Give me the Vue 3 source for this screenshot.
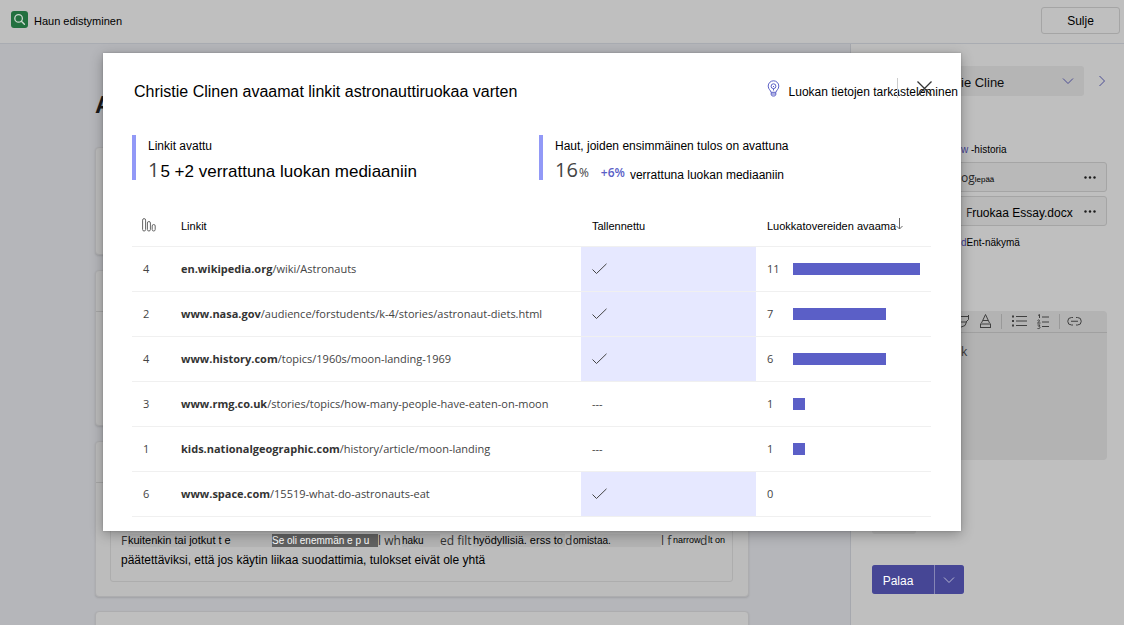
<script setup>
import { ref } from 'vue'

const maxOpened = 11
const rows = [
  { count: 4, host: 'en.wikipedia.org', path: '/wiki/Astronauts', saved: true, opened: 11, share: 100 },
  { count: 2, host: 'www.nasa.gov', path: '/audience/forstudents/k-4/stories/astronaut-diets.html', saved: true, opened: 7, share: 73 },
  { count: 4, host: 'www.history.com', path: '/topics/1960s/moon-landing-1969', saved: true, opened: 6, share: 73 },
  { count: 3, host: 'www.rmg.co.uk', path: '/stories/topics/how-many-people-have-eaten-on-moon', saved: false, opened: 1, share: 100 / maxOpened },
  { count: 1, host: 'kids.nationalgeographic.com', path: '/history/article/moon-landing', saved: false, opened: 1, share: 100 / maxOpened },
  { count: 6, host: 'www.space.com', path: '/15519-what-do-astronauts-eat', saved: true, opened: 0, share: 0 },
]

const answer = [
  { text: 'F', kind: 'soft', width: 7 },
  { text: 'kuitenkin tai jotkut t e', kind: 'plain shade', width: 144 },
  { text: 'Se oli enemmän e p u', kind: 'picked', width: 106 },
  { text: 'l wh', kind: 'soft', width: 24 },
  { text: 'haku', kind: 'small shade', width: 38 },
  { text: 'ed filt', kind: 'soft', width: 33 },
  { text: 'hyödyllisiä. erss to', kind: 'plain shade', width: 92 },
  { text: 'd', kind: 'soft', width: 8 },
  { text: 'omistaa.', kind: 'small shade', width: 88 },
  { text: 'l f', kind: 'soft', width: 12 },
  { text: 'narrow', kind: 'tiny', width: 27 },
  { text: 'd', kind: 'soft', width: 8 },
  { text: 'lt on', kind: 'tiny', width: 20 },
]

const student = ref('cline')
const feedback = ref('k')
</script>

<template>
  <div class="page">
    <header class="topbar">
      <svg class="logo" viewBox="0 0 17 17" aria-hidden="true">
        <rect x="0" y="0" width="17" height="17" rx="3" fill="#22703f" />
        <circle cx="7.6" cy="7.4" r="3.8" fill="none" stroke="#c9d6cd" stroke-width="1.3" />
        <path d="M10.4 10.3 13.4 13.3" stroke="#c9d6cd" stroke-width="1.4" stroke-linecap="round" />
      </svg>
      <span class="app-name">Haun edistyminen</span>
      <button class="close-app" type="button">Sulje</button>
    </header>

    <div class="body">
      <main class="content">
        <h1>A</h1>
        <section class="card first"></section>
        <section class="card second"><div class="card-head"></div></section>
        <section class="card third">
          <div class="card-head"></div>
          <div class="answer">
            <p class="answer-line">
              <span v-for="(part, i) in answer" :key="i" :class="part.kind" :style="{ width: part.width + 'px' }">{{ part.text }}</span>
            </p>
            <p>päätettäviksi, että jos käytin liikaa suodattimia, tulokset eivät ole yhtä</p>
          </div>
        </section>
        <section class="card last"></section>
      </main>

      <aside class="side">
        <div class="student">
          <div class="select-wrap">
            <select v-model="student" aria-label="Cline">
              <option value="cline">ie Cline</option>
            </select>
            <svg class="chev" viewBox="0 0 12 8" aria-hidden="true"><path d="M1 1.5 6 6.5 11 1.5" /></svg>
          </div>
          <button class="next" type="button" aria-label="&gt;">
            <svg viewBox="0 0 8 12" aria-hidden="true"><path d="M1.5 1 6.5 6 1.5 11" /></svg>
          </button>
        </div>
        <a class="side-link" href="#"><b>w</b> -historia</a>
        <div class="file">
          <span class="file-name"><i>og</i><small>lepää</small></span>
          <button type="button" aria-label="...">
            <svg viewBox="0 0 12 3" aria-hidden="true"><circle cx="1.5" cy="1.5" r="1.2" /><circle cx="6" cy="1.5" r="1.2" /><circle cx="10.5" cy="1.5" r="1.2" /></svg>
          </button>
        </div>
        <div class="file">
          <span class="file-name doc"><i>F</i>ruokaa Essay.docx</span>
          <button type="button" aria-label="...">
            <svg viewBox="0 0 12 3" aria-hidden="true"><circle cx="1.5" cy="1.5" r="1.2" /><circle cx="6" cy="1.5" r="1.2" /><circle cx="10.5" cy="1.5" r="1.2" /></svg>
          </button>
        </div>
        <a class="side-link view" href="#"><b>d</b>Ent-näkymä</a>
        <div class="editor">
          <div class="toolbar">
            <svg class="tools" viewBox="0 0 130 20" aria-hidden="true">
              <path d="M0 5.500H8.500V8.500L6 11H0M6.500 11 5 14.500 0 16.500M8.500 4V8" />
              <path d="M21.500 12 25.500 3.500 29.500 12M23 9.500H28" />
              <rect x="20.500" y="13" width="10" height="3.500" />
              <path class="sep" d="M41.500 3V18M99.500 3V18" />
              <path d="M56 5.500H67M56 10H67M56 14.500H67" />
              <path class="dots" d="M52 5.500H54M52 10H54M52 14.500H54" />
              <path d="M82 6H89M82 11H89M82 15.500H89" />
              <path d="M78 4.500 79.500 3.500V7M77.500 9.500C79 8 81 9.500 77.500 12H80.500M77.500 14H80L78.800 15.500C81 15.500 80.500 18 77.500 17.500" />
              <path d="M113 6.500H111.500A3.500 3.500 0 0 0 111.500 14H113M116 6.500H117.500A3.500 3.500 0 0 1 117.500 14H116M111 10.250H118" />
            </svg>
          </div>
          <textarea v-model="feedback" aria-label="Palaa"></textarea>
        </div>
        <div class="stub"></div>
        <div class="return">
          <button type="button" class="return-main">Palaa</button>
          <button type="button" class="return-more" aria-label="Palaa">
            <svg class="chev" viewBox="0 0 12 8" aria-hidden="true"><path d="M1 1.500 6 6.500 11 1.500" /></svg>
          </button>
        </div>
      </aside>
    </div>

    <div class="dialog" role="dialog" aria-labelledby="dialog-title">
      <div class="dialog-head">
        <h2 id="dialog-title">Christie Clinen avaamat linkit astronauttiruokaa varten</h2>
        <button class="insights" type="button">
          <svg viewBox="0 0 13 17" aria-hidden="true">
            <path d="M4 12.300C4 10.500 1.200 9.300 1.200 6.100A5.300 5.300 0 0 1 11.800 6.100C11.800 9.300 9 10.500 9 12.300ZM4.200 12.500V14.500L5.200 16H7.800L8.800 14.500V12.500M4.200 14H8.800" />
            <circle cx="6.500" cy="6.200" r="2.400" />
            <path d="M6.500 6V7M6.500 8.600V10.500" />
          </svg>
          <span>Luokan tietojen tarkasteleminen</span>
        </button>
        <button class="dismiss" type="button" aria-label="Sulje">
          <svg viewBox="0 0 15 15" aria-hidden="true"><path d="M0.500 0.500 14.500 14.500M14.500 0.500 0.500 14.500" /></svg>
        </button>
      </div>

      <div class="stats">
        <div class="stat">
          <p class="stat-label">Linkit avattu</p>
          <p class="stat-value"><span class="big">1</span><span class="mid">5 +2 verrattuna luokan mediaaniin</span></p>
        </div>
        <div class="stat">
          <p class="stat-label">Haut, joiden ensimmäinen tulos on avattuna</p>
          <p class="stat-value"><span class="big">16</span><span class="unit">%</span><span class="delta">+6%</span><span class="note">verrattuna luokan mediaaniin</span></p>
        </div>
      </div>

      <table>
        <colgroup><col class="c-count" /><col /><col class="c-saved" /><col class="c-opened" /></colgroup>
        <thead>
          <tr>
            <th>
              <svg class="rank" viewBox="0 0 14 14" aria-hidden="true">
                <rect x="0.600" y="0.600" width="3" height="12.400" rx="1.500" />
                <rect x="5.400" y="3.500" width="3" height="9.500" rx="1.500" />
                <rect x="10.200" y="6.500" width="3" height="6.500" rx="1.500" />
              </svg>
            </th>
            <th class="url-head">Linkit</th>
            <th class="saved-head">Tallennettu</th>
            <th class="opened-head">Luokkatovereiden avaama<svg viewBox="0 0 7 12" aria-hidden="true"><path d="M3.500 0V11M0.500 8 3.500 11 6.500 8" /></svg></th>
          </tr>
        </thead>
        <tbody>
          <tr v-for="row in rows" :key="row.host">
            <td class="count">{{ row.count }}</td>
            <td class="url"><b>{{ row.host }}</b>{{ row.path }}</td>
            <td class="saved" :class="{ yes: row.saved }">
              <svg v-if="row.saved" viewBox="0 0 15 12" aria-hidden="true"><path d="M0.500 6.500 4.500 10.500 14.500 0.800" /></svg>
              <template v-else>---</template>
            </td>
            <td class="opened">
              <div class="meter">
                <span>{{ row.opened }}</span>
                <div class="track"><div class="bar" :style="{ width: row.share + '%' }"></div></div>
              </div>
            </td>
          </tr>
        </tbody>
      </table>
    </div>
  </div>
</template>

<style>
body {
  background: #b5b6ba;
}
</style>

<style scoped>
* {
  box-sizing: border-box;
}
.page {
  position: relative;
  display: flex;
  flex-direction: column;
  height: 100vh;
  overflow: hidden;
  background: #b5b6ba;
  color: #000;
  font: 12px/16px "Liberation Sans", Arial, sans-serif;
}
h1, h2, p {
  margin: 0;
}
button, select, textarea {
  font: inherit;
  color: inherit;
  padding: 0;
  border: 0;
  background: none;
}
a {
  color: inherit;
  text-decoration: none;
}
svg {
  display: block;
  fill: none;
  stroke: currentColor;
}

.topbar {
  flex: none;
  display: flex;
  align-items: center;
  height: 44px;
  padding: 0 4px 2px 11px;
  background: #bfbfbf;
  border-bottom: 1px solid #a9acb2;
}
.logo {
  width: 17px;
  height: 17px;
  margin: 0 6px 2px 0;
  stroke: none;
}
.app-name {
  font-size: 11px;
}
.close-app {
  width: 79px;
  height: 27px;
  margin-left: auto;
  border: 1px solid #a5a5a5;
  border-radius: 3px;
}

.body {
  flex: 1;
  display: flex;
  min-height: 0;
}
.content {
  flex: 1;
  display: flex;
  flex-direction: column;
  min-width: 0;
  padding: 46px 101px 0 95px;
}
h1 {
  margin-bottom: 27px;
  font-size: 24px;
  line-height: 30px;
  color: #1a1a1a;
}
.card {
  flex: none;
  display: flex;
  flex-direction: column;
  background: #bcbcbc;
  border: 1px solid #adadaf;
  border-radius: 4px;
  box-shadow: 0 1px 2px rgba(0, 0, 0, 0.12);
}
.first {
  height: 108px;
  margin-bottom: 15px;
}
.second {
  height: 156px;
  margin-bottom: 15px;
}
.third {
  height: 156px;
  margin-bottom: 14px;
}
.last {
  height: 60px;
  background: #bfbfbf;
}
.card-head {
  height: 41px;
  border-bottom: 1px solid #a6a6a6;
}
.answer {
  flex: 1;
  margin: 14px 15px 14px 14px;
  padding: 32px 10px 0;
  border: 1px solid #adadad;
  border-radius: 3px;
  line-height: 20px;
  white-space: nowrap;
}
.answer-line {
  display: flex;
  align-items: center;
  height: 20px;
}
.answer-line span {
  flex: none;
  height: 13px;
  line-height: 13px;
}
.answer-line .soft {
  color: #333;
  font-family: "Open Sans", sans-serif;
  font-size: 12px;
}
.answer-line .plain {
  font-size: 11px;
}
.answer-line .small {
  font-size: 10px;
}
.answer-line .tiny {
  font-size: 9px;
}
.answer-line .shade {
  background: #b3b3b3;
}
.answer-line .picked {
  background: #616161;
  color: #fff;
  font-size: 10px;
}

.side {
  display: flex;
  flex-direction: column;
  width: 274px;
  padding: 22px 17px 0 21px;
  background: #bfbfbf;
  border-left: 1px solid #a6a8ae;
}
.student {
  display: flex;
  align-items: center;
  margin-bottom: 46px;
}
.select-wrap {
  position: relative;
  flex: 1;
  color: #4a4b94;
}
select {
  appearance: none;
  display: block;
  width: 100%;
  height: 30px;
  padding: 3px 20px 0 89px;
  border-radius: 3px;
  background: #b5b5b5;
  color: #0c0c0c;
  font-size: 13px;
}
.chev {
  width: 12px;
  height: 8px;
}
.select-wrap .chev {
  position: absolute;
  right: 10px;
  top: 11px;
}
.next {
  width: 23px;
  color: #4a4b94;
}
.next svg {
  width: 8px;
  height: 12px;
  margin-left: 14px;
}
.side-link {
  padding-left: 89px;
  font-size: 10px;
}
.side-link b {
  color: #3f4090;
  font-weight: 400;
}
.file {
  display: flex;
  align-items: center;
  height: 30px;
  margin-top: 4px;
  padding: 0 10px 0 88px;
  border: 1px solid #a5a5a5;
  border-radius: 3px;
  background: #b9b9b9;
}
.file-name {
  flex: 1;
  padding-top: 3px;
  white-space: nowrap;
}
.file-name i {
  font: 12px/16px "Open Sans", sans-serif;
  color: #2a2a2a;
}
.file-name small {
  font-size: 8px;
}
.doc {
  padding-left: 5px;
}
.file svg {
  width: 12px;
  height: 3px;
  fill: #1c1c1c;
  stroke: none;
}
.view {
  margin-top: 9px;
}
.editor {
  margin-top: 60px;
  border-radius: 4px;
  background: #b3b3b3;
}
.toolbar {
  height: 22px;
  padding-left: 88px;
  border-bottom: 1px solid #a0a0a0;
}
.tools {
  width: 130px;
  height: 20px;
  color: #404040;
}
.tools .sep {
  stroke: #999;
}
.tools .dots {
  stroke-width: 2;
}
textarea {
  display: block;
  width: 100%;
  height: 127px;
  padding: 11px 8px 0 89px;
  resize: none;
  color: #3a3a3a;
  font-family: "Open Sans", sans-serif;
}
.stub {
  width: 44px;
  height: 30px;
  margin-top: 44px;
  border-radius: 3px;
  background: #b4b4b4;
}
.return {
  display: flex;
  gap: 1px;
  width: 92px;
  height: 29px;
  margin-top: 31px;
  border-radius: 3px;
  overflow: hidden;
  background: #8585b5;
  color: #fff;
}
.return button {
  background: #464695;
}
.return-main {
  flex: 1;
  padding: 2px 10px 0 0;
}
.return-more {
  width: 29px;
  padding-left: 8px;
}
.return-more .chev {
  stroke: #b5b5d0;
}

.dialog {
  position: absolute;
  top: 53px;
  left: 103px;
  right: 163px;
  padding: 22px 30px 14px 29px;
  background: #fff;
  box-shadow: 0 3px 12px rgba(0, 0, 0, 0.3), 0 0 2px rgba(0, 0, 0, 0.2);
}
.dialog-head {
  position: relative;
  display: flex;
  align-items: center;
  justify-content: space-between;
  height: 34px;
  margin-right: -27px;
}
h2 {
  padding-left: 2px;
  font-size: 16px;
  line-height: 20px;
  font-weight: 400;
}
.insights {
  display: flex;
  align-items: center;
  gap: 9px;
  white-space: nowrap;
}
.insights svg {
  width: 13px;
  height: 17px;
  margin-bottom: 7px;
  color: #5b5fc7;
}
.dismiss {
  position: absolute;
  right: 26px;
  top: 3px;
  height: 20px;
  padding-left: 19px;
  border-left: 1px solid #ccc;
  color: #333;
}
.dismiss svg {
  width: 15px;
  height: 15px;
  stroke-width: 1.3;
}
.stats {
  display: grid;
  grid-template-columns: 407px 1fr;
  margin-top: 26px;
}
.stat {
  height: 45px;
  padding-left: 12px;
  border-left: 4px solid #9299f7;
}
.stat-label {
  padding-top: 3px;
}
.stat-value {
  display: flex;
  align-items: center;
  height: 32px;
  line-height: 26px;
  white-space: nowrap;
}
.big {
  color: #444;
  font-family: "Open Sans", sans-serif;
  font-size: 20px;
}
.mid {
  padding: 3px 0 0 1px;
  font-size: 17px;
}
.unit {
  padding: 6px 0 0 1px;
  color: #444;
  font-family: "Open Sans", sans-serif;
}
.delta {
  margin: 0 5px 0 12px;
  padding-top: 6px;
  color: #5b5fc7;
  font-family: "Open Sans", sans-serif;
  font-weight: 600;
}
.note {
  padding-top: 9px;
}

table {
  width: 100%;
  margin-top: 25px;
  border-collapse: collapse;
  table-layout: fixed;
}
.c-count {
  width: 49px;
}
.c-saved {
  width: 175px;
}
.c-opened {
  width: 175px;
}
th, td {
  padding: 0;
  text-align: left;
  font-weight: 400;
  border-bottom: 1px solid #f0f0f0;
  white-space: nowrap;
}
th {
  height: 41px;
  padding-top: 2px;
  font-size: 11px;
}
td {
  height: 45px;
  color: #444;
  font-family: "Open Sans", sans-serif;
  font-size: 11px;
}
.rank {
  width: 14px;
  height: 14px;
  margin: 0 0 3px 10px;
  color: #666;
}
.saved-head, .saved, .opened-head, .opened {
  padding-left: 11px;
}
.opened-head svg {
  display: inline-block;
  width: 7px;
  height: 12px;
  color: #666;
}
.count {
  padding-left: 11px;
}
.url b {
  color: #333;
}
.yes {
  background: #e6e8ff;
}
.saved svg {
  width: 15px;
  height: 12px;
}
.meter {
  display: flex;
  align-items: center;
  padding-right: 11px;
}
.meter span {
  width: 26px;
}
.track {
  flex: 1;
}
.bar {
  height: 12px;
  background: #5b5fc7;
}
</style>
